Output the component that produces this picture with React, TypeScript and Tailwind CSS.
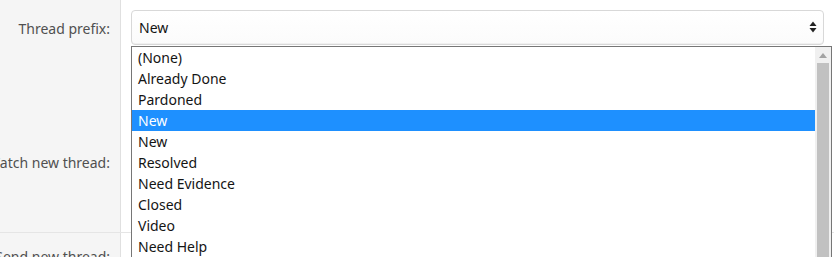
import React from 'react';

const prefixes = ['(None)', 'Already Done', 'Pardoned', 'New', 'New', 'Resolved', 'Need Evidence', 'Closed', 'Video', 'Need Help', 'Pending'];

const SortArrows = () => (
  <svg width="8" height="12" viewBox="0 0 8 12" className="shrink-0">
    <path d="M4 0.5 L7.5 5 L0.5 5 Z" fill="#222" />
    <path d="M4 11.5 L7.5 7 L0.5 7 Z" fill="#222" />
  </svg>
);

const FormRow = ({ label, height, labelClass = 'items-center', children }: { label: string; height: string; labelClass?: string; children?: React.ReactNode }) => (
  <div className={`flex ${height}`}>
    <div className={`w-[121px] shrink-0 bg-[#f5f5f5] border-r border-[#e0e0e0] flex justify-end pr-[10px] whitespace-nowrap overflow-hidden ${labelClass}`}>
      <span className="text-[14px] text-[#505050]">{label}</span>
    </div>
    <div className="flex-1 px-[10px] flex items-center">{children}</div>
  </div>
);

export default function App() {
  const selected = 3;
  return (
    <div className="relative w-[834px] h-[257px] overflow-hidden bg-white" style={{ fontFamily: '"Noto Sans", "Segoe UI", sans-serif' }}>
      <FormRow label="Thread prefix:" height="h-[56px]">
        <div className="w-full h-[35px] mb-[2px] border border-[#d8d8d8] rounded-[4px] bg-gradient-to-b from-white to-[#fbfbfb] shadow-[inset_0_-1px_0_#f0f0f0] flex items-center pl-[7px] pr-[6px]">
          <span className="flex-1 text-[14px] text-[#141414]">New</span>
          <SortArrows />
        </div>
      </FormRow>
      <div className="border-b border-[#e5e5e5]">
        <FormRow label="Watch new thread:" height="h-[176px]" labelClass="items-start pt-[96px]" />
      </div>
      <FormRow label="Send new thread:" height="h-[50px]" labelClass="items-start pt-[13px]" />

      {/* open option list */}
      <div className="absolute left-[131px] top-[46px] w-[701px] h-[240px] border border-[#767676] bg-white flex">
        <ul className="flex-1">
          {prefixes.map((p, i) => (
            <li
              key={i}
              className={`h-[21px] leading-[21px] pl-[6px] text-[14px] ${i === selected ? 'bg-[#1e90ff] text-white' : 'text-[#141414]'}`}
            >
              {p}
            </li>
          ))}
        </ul>
        <div className="w-[16px] bg-[#f0f0f0] flex flex-col items-center">
          <div className="h-[16px] flex items-center justify-center">
            <svg width="8" height="5" viewBox="0 0 8 5">
              <path d="M4 0 L8 5 L0 5 Z" fill="#a3a3a3" />
            </svg>
          </div>
          <div className="w-[12px] flex-1 bg-[#c1c1c1]" />
        </div>
      </div>
    </div>
  );
}
